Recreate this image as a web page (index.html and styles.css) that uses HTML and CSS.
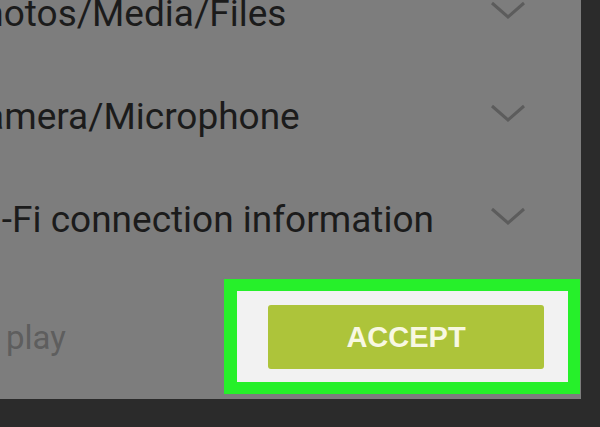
FILE: index.html
```html
<!DOCTYPE html>
<html>
<head>
<meta charset="utf-8">
<link rel="stylesheet" href="styles.css">
</head>
<body>
<div class="dialog">
  <div class="list">
    <div class="row">
      <span class="label">Photos/Media/Files</span>
      <svg class="chev" width="36" height="18" viewBox="0 0 36 18"><polyline points="2,2 18,16 34,2" fill="none" stroke="#5c5c5c" stroke-width="3"/></svg>
    </div>
    <div class="row">
      <span class="label">Camera/Microphone</span>
      <svg class="chev" width="36" height="18" viewBox="0 0 36 18"><polyline points="2,2 18,16 34,2" fill="none" stroke="#5c5c5c" stroke-width="3"/></svg>
    </div>
    <div class="row">
      <span class="label">Wi-Fi connection information</span>
      <svg class="chev" width="36" height="18" viewBox="0 0 36 18"><polyline points="2,2 18,16 34,2" fill="none" stroke="#5c5c5c" stroke-width="3"/></svg>
    </div>
  </div>
  <div class="footer">
    <span class="brand">play</span>
    <div class="highlight">
      <button class="accept">ACCEPT</button>
    </div>
  </div>
</div>
</body>
</html>
```
FILE: styles.css
```css
html, body {
  margin: 0;
  padding: 0;
}
body {
  width: 600px;
  height: 427px;
  overflow: hidden;
  background: #2b2b2b;
  font-family: Roboto, "Noto Sans", sans-serif;
}
.dialog {
  width: 621px;
  height: 399px;
  margin-left: -40px;
  background: #7d7d7d;
  box-sizing: border-box;
  display: flex;
  flex-direction: column;
  overflow: hidden;
}
.list {
  margin-top: -38px;
  display: flex;
  flex-direction: column;
}
.row {
  height: 103px;
  display: flex;
  align-items: center;
  justify-content: space-between;
  padding-right: 55px;
}
.label {
  font-size: 37px;
  line-height: 44px;
  color: #1b1b1b;
  white-space: nowrap;
}
.chev {
  display: block;
  margin-bottom: 7px;
}
.footer {
  display: flex;
  align-items: center;
  justify-content: space-between;
  padding-top: 8px;
  padding-right: 1px;
}
.brand {
  margin-left: 46px;
  margin-top: 2px;
  font-size: 33px;
  line-height: 40px;
  color: #5e5e5e;
}
.highlight {
  border: 12px solid #26f02a;
  border-left-width: 13px;
  background: #f2f2f2;
  padding: 14px 24px 13px 31px;
  display: flex;
}
.accept {
  width: 276px;
  height: 64px;
  border: none;
  border-radius: 3px;
  background: #adc43a;
  color: #f8f8e2;
  font-family: "Liberation Sans", Arial, sans-serif;
  font-weight: bold;
  font-size: 29px;
  padding: 0;
}
```
